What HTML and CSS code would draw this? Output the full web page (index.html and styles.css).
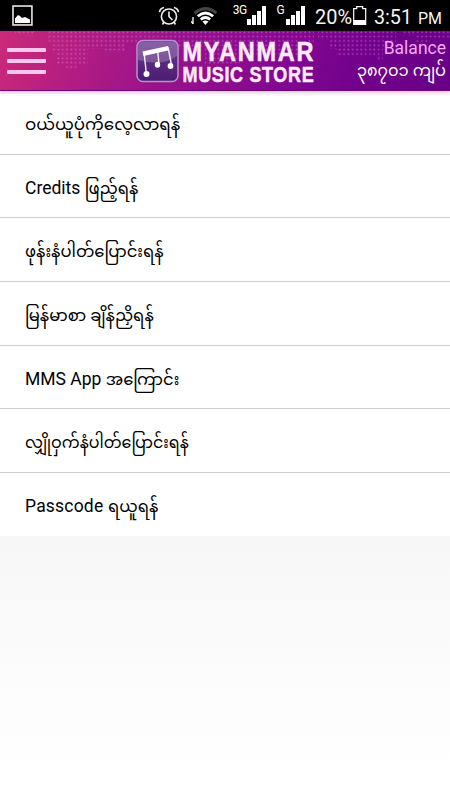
FILE: index.html
```html
<!DOCTYPE html>
<html lang="my">
<head>
    <meta charset="UTF-8">
    <meta name="viewport" content="width=device-width, initial-scale=1.0">
    <title>Myanmar Music Store</title>
    <link rel="stylesheet" href="styles.css">
</head>
<body>
    <div class="status">
        <svg class="photo" width="21" height="21" viewBox="0 0 21 21">
            <rect x="1" y="1" width="19" height="19" fill="none" stroke="#e8e8e8" stroke-width="1.6"/>
            <path d="M3 18v-4.500l3-3.500 2 1 2 2 3-1 2 1 3 1.500V18z" fill="#fff"/>
        </svg>
        <svg class="alarm" width="22" height="20" viewBox="0 0 22 20" fill="none" stroke="#eee" stroke-width="1.600">
            <circle cx="11" cy="10.500" r="7.600"/>
            <path d="M11 5.500v5l3.500 3.500M1.500 6Q2 2.500 6 1.500M20.500 6Q20 2.500 16 1.500M6 16l-1.500 2.500M16 16l1.500 2.500"/>
        </svg>
        <svg class="wifi" width="28" height="19" viewBox="0 0 28 19" fill="none">
            <path d="M3.500 6.200Q15 -3 25.500 6.200" stroke="#444" stroke-width="3"/>
            <path d="M6.800 9.200Q14.500 2.800 22.200 9.200M9.800 12.500Q14.500 8.500 19.200 12.500" stroke="#fff" stroke-width="2.800"/>
            <path d="M11.500 14.500Q14.500 12.500 17.500 14.500L14.500 18z" fill="#fff"/>
            <path d="M2 10v7M.2 14.500l1.800 2.500" stroke="#fff" stroke-width="1.300"/>
        </svg>
        <div class="signal first">
            <span>3G</span>
            <svg width="20" height="19" fill="#fff"><path d="M0 13h4v6H0zM5 9h4v10H5zM10 5h4v14h-4zM15 0h4v19h-4z"/></svg>
        </div>
        <div class="signal second">
            <span>G</span>
            <svg width="20" height="19" fill="#fff"><path d="M0 13h4v6H0zM5 9h4v10H5zM10 5h4v14h-4zM15 0h4v19h-4z"/></svg>
        </div>
        <svg class="info" width="135" height="31" fill="#f4f4f4">
            <text x="0" y="23.500" font-size="21" textLength="37" lengthAdjust="spacingAndGlyphs">20%</text>
            <path d="M38.700 24.300V8.700h3V6.700h6v2h3v15.600z" fill="none" stroke="#fff" stroke-width="1.200"/>
            <path d="M39 20h12v5H39z" fill="#fff"/>
            <text x="59" y="23.500" font-size="21" textLength="38" lengthAdjust="spacingAndGlyphs">3:51</text>
            <text x="103" y="23.500" font-size="16" textLength="24" lengthAdjust="spacingAndGlyphs">PM</text>
        </svg>
    </div>
    <div class="header">
        <!-- dotted world map -->
        <svg class="map" width="450" height="60">
            <defs>
                <pattern id="dots" width="4.330" height="4.330" patternUnits="userSpaceOnUse">
                    <circle cx="2" cy="1.300" r=".95" fill="#e88ee8" fill-opacity=".45"/>
                </pattern>
            </defs>
            <path d="M15 0H34V5H25V3H15zM48 0H166V13H126V22H104V18H88V34H78V39H66V34H57V22H51V13H48zM166 0H314V13H307V8H300V25H240V34H205V18H166zM318 0H396V17H383V30H376V26H336V18H330V9H318zM402 0H450V7H430V12H416V5H402z" fill="url(#dots)"/>
        </svg>
        <div class="menu">
            <i></i>
            <i></i>
            <i></i>
        </div>
        <svg class="logo" width="180" height="60" viewBox="0 0 180 60">
            <defs>
                <linearGradient id="tile" x1="0" y1="0" x2="0" y2="1">
                    <stop offset="0" stop-color="#6b3b91"/>
                    <stop offset="1" stop-color="#4a1c70"/>
                </linearGradient>
            </defs>
            <rect x="2" y="9.500" width="41" height="41" rx="6" fill="url(#tile)" stroke="#bd91ce" stroke-width="1.500"/>
            <path d="M3 16q0-5 5-5h29q5 0 5 5v9Q28 36 3 29z" fill="#fff" fill-opacity=".2"/>
            <path d="M9 21l2.300 21M22.500 18l1.500 15.500M33 16l3.500 18" stroke="#f8effb" stroke-width="1.400"/>
            <path d="M7.500 20.500L33 15v4.500L8.500 25z" fill="#fff"/>
            <ellipse cx="11.500" cy="43" rx="3" ry="3" fill="#fff"/>
            <ellipse cx="22.500" cy="33.700" rx="2.700" ry="3" fill="#fff"/>
            <ellipse cx="35.500" cy="35" rx="2.900" ry="3" fill="#fff"/>
            <text transform="translate(47.500 29.500) scale(.84 1)" font-size="28" textLength="156">MYANMAR</text>
            <text transform="translate(47.500 50.800) scale(.82 1)" font-size="22" textLength="160">MUSIC STORE</text>
        </svg>
        <div class="balance">
            <p>Balance</p>
            <p class="money">၃၈၇၀၁ ကျပ်</p>
        </div>
    </div>
    <ul class="list">
        <li class="loose">ဝယ်ယူပုံကိုလေ့လာရန်</li>
        <li><span>Credits </span>ဖြည့်ရန်</li>
        <li>ဖုန်းနံပါတ်ပြောင်းရန်</li>
        <li>မြန်မာစာ ချိန်ညှိရန်</li>
        <li><span>MMS App </span>အကြောင်း</li>
        <li class="tight">လျှိုဝှက်နံပါတ်ပြောင်းရန်</li>
        <li><span class="wide">Passcode </span>ရယူရန်</li>
    </ul>
</body>
</html>
```
FILE: styles.css
```css
* {
    padding: 0;
    margin: 0;
    box-sizing: border-box;
}
body {
    width: 450px;
    height: 800px;
    overflow: hidden;
    font-family: Roboto, "Noto Sans Myanmar", "Noto Sans", sans-serif;
    background: linear-gradient(#fff 0, #f7f7f7 536px, #fff 780px);
}
.status {
    display: flex;
    height: 31px;
    padding-left: 12px;
    background: #000;
    color: #fff;
}
.photo {
    margin-top: 5px;
}
.alarm {
    margin: 6px 0 0 125px;
}
.wifi {
    margin: 7px 0 0 11px;
}
.signal {
    display: flex;
}
.signal span {
    font-size: 12px;
    line-height: 13px;
    margin-top: 4px;
    letter-spacing: -.5px;
}
.signal svg {
    margin-top: 6px;
}
.first {
    width: 44px;
    margin-left: 14px;
}
.first span {
    width: 14px;
}
.second {
    width: 39px;
}
.second span {
    width: 9px;
}
.info {
    margin-left: auto;
}
.header {
    position: relative;
    display: flex;
    height: 60px;
    background: linear-gradient(108deg, #cb2a78 0, #b51e81 16%, #98128b 38%, #850791 62%, #6f008b 82%, #680087 100%);
    border-bottom: 1px solid #6f0876;
    box-shadow: 0 1px 4px rgba(150, 60, 130, .45);
}
.map {
    position: absolute;
    left: 0;
    top: 0;
}
.menu {
    display: flex;
    flex-direction: column;
    gap: 7px;
    width: 39px;
    margin: 17px 0 0 7px;
}
.menu i {
    height: 4px;
    border-radius: 1px;
    background: #fbc6ed;
}
.logo {
    margin-left: 89px;
    z-index: 1;
    overflow: visible;
    font-family: "Liberation Sans", Arial, sans-serif;
    font-weight: bold;
    fill: #fceafc;
}
.logo text {
    stroke: #fceafc;
    stroke-width: .5px;
}
.balance {
    z-index: 1;
    margin-left: auto;
    padding: 6px 4px 0 0;
    text-align: right;
    white-space: nowrap;
    color: #f5a9f4;
    font-size: 17.5px;
    line-height: 22px;
}
.money {
    color: #fff;
    font-size: 16.2px;
    line-height: 23px;
}
.list {
    background: #fff;
}
.list li {
    height: 63.7px;
    padding: 5px 0 0 25px;
    border-bottom: 1px solid #ccc;
    list-style: none;
    white-space: pre;
    font-size: 16.4px;
    line-height: 57px;
    color: #000;
}
.list li:last-child {
    height: 63px;
    border-bottom: 0;
}
.list .loose {
    font-size: 16.7px;
}
.list .tight {
    font-size: 15.9px;
}
.list span {
    font-size: 17.5px;
}
.list .wide {
    letter-spacing: .2px;
}
```
